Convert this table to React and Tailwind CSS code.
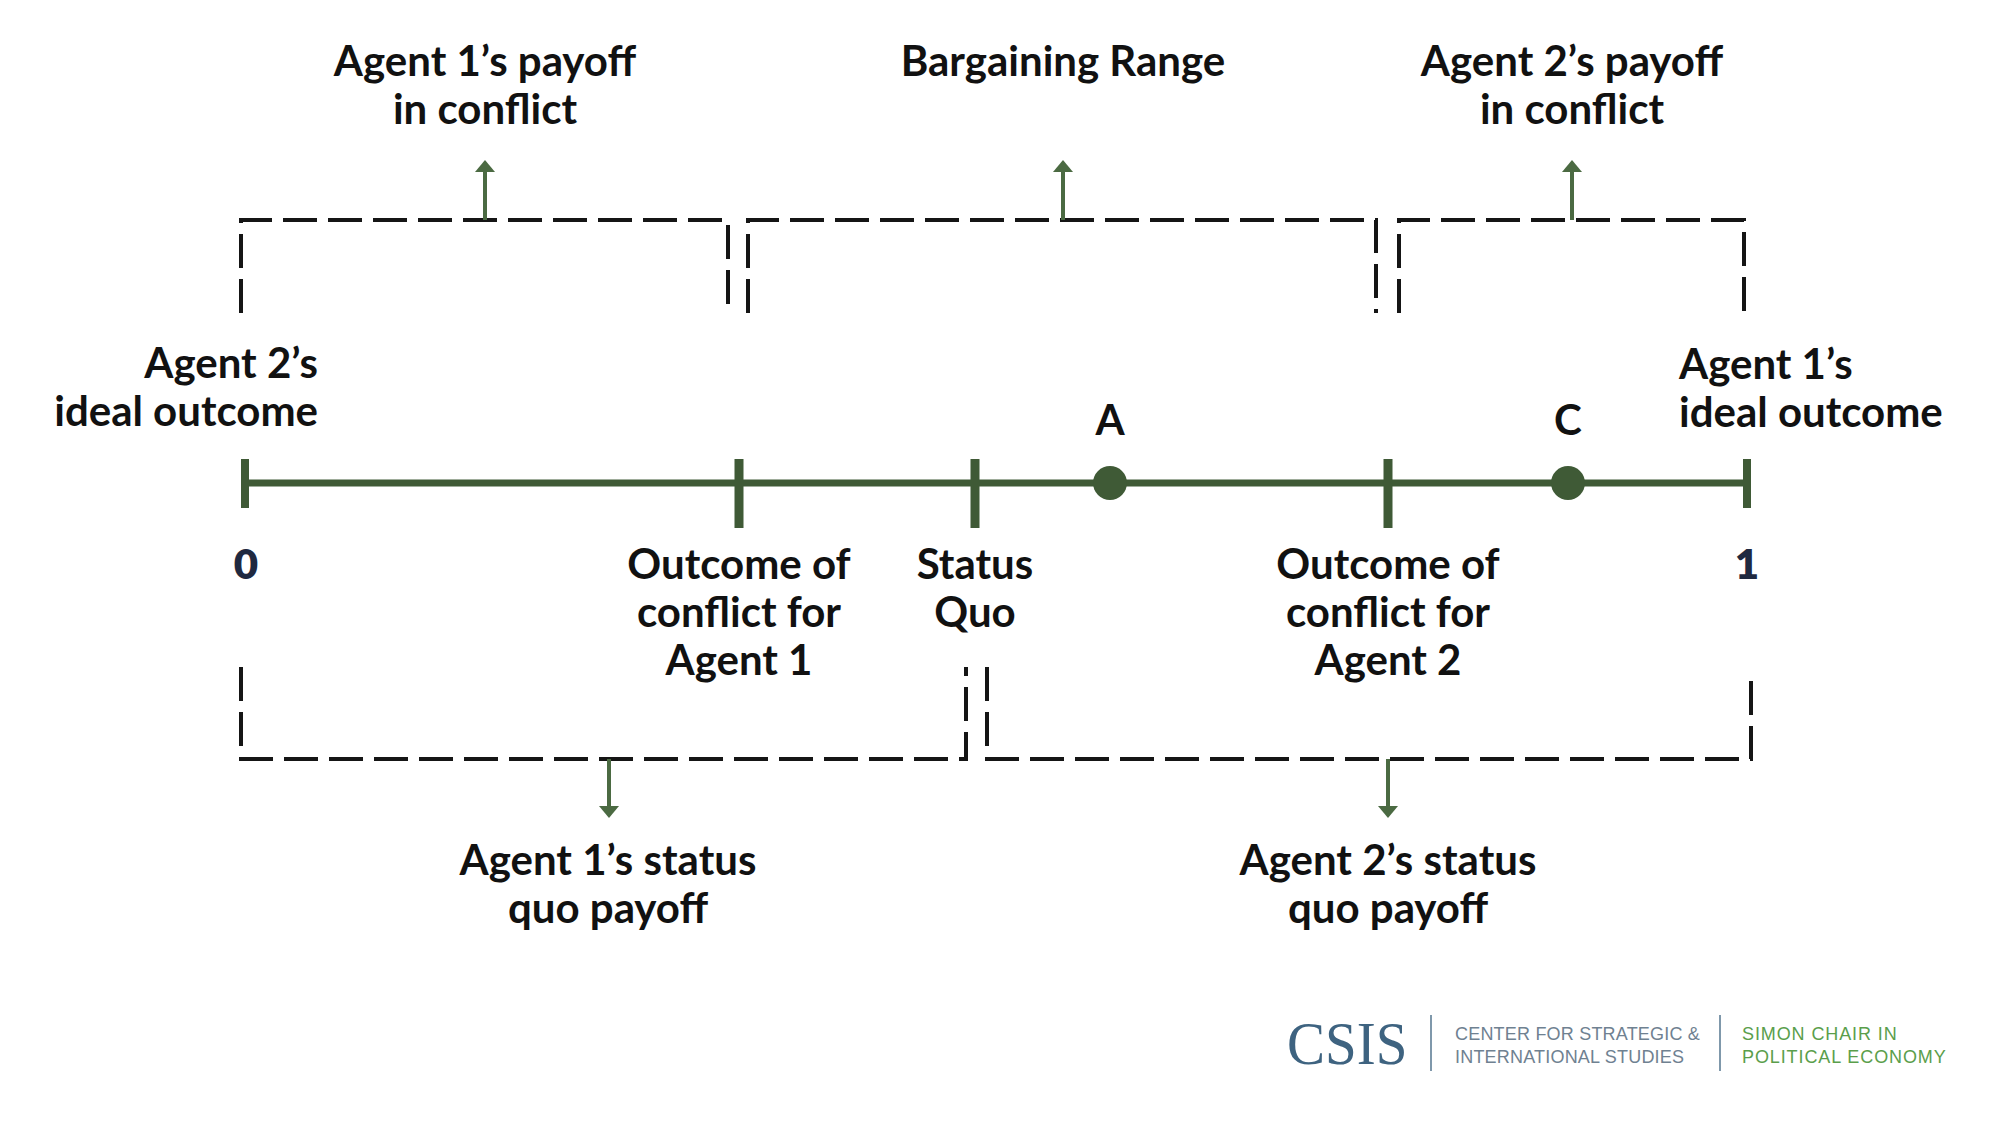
import React from 'react';

const GREEN = '#3f5a36';
const ARROW = '#4b6a42';

// dashed brackets above / below the axis
const BRACKETS = [
    'M241 313 V220 H728 V313',
    'M748 313 V220 H1376 V313',
    'M1399 313 V220 H1744 V313',
    'M241 667 V759 H966 V667',
    'M987 667 V759 H1751 V677',
];

const TICKS = [
    { x: 245, y1: 459, y2: 508, w: 8 },
    { x: 739, y1: 459, y2: 528, w: 9 },
    { x: 975, y1: 459, y2: 528, w: 9 },
    { x: 1388, y1: 459, y2: 528, w: 9 },
    { x: 1747, y1: 459, y2: 508, w: 8 },
];

const UpArrow = ({ x }) => (
    <g fill={ARROW} stroke="none">
        <rect x={x - 2} y={170} width={4} height={50} />
        <polygon points={`${x - 10},172 ${x + 10},172 ${x},160`} />
    </g>
);

const DownArrow = ({ x }) => (
    <g fill={ARROW} stroke="none">
        <rect x={x - 2} y={759} width={4} height={50} />
        <polygon points={`${x - 10},806 ${x + 10},806 ${x},818`} />
    </g>
);

function Diagram() {
    return (
        <svg className="absolute inset-0" width="2000" height="1000" viewBox="0 0 2000 1000">
            {BRACKETS.map((d, i) => (
                <path key={i} d={d} fill="none" stroke="#151515" strokeWidth="4" strokeDasharray="34 11" />
            ))}
            <UpArrow x={485} />
            <UpArrow x={1063} />
            <UpArrow x={1572} />
            <DownArrow x={609} />
            <DownArrow x={1388} />

            <rect x={245} y={479.5} width={1502} height={7} fill={GREEN} />
            {TICKS.map((t) => (
                <rect key={t.x} x={t.x - t.w / 2} y={t.y1} width={t.w} height={t.y2 - t.y1} fill={GREEN} />
            ))}
            <circle cx={1110} cy={483} r={17} fill={GREEN} />
            <circle cx={1568} cy={483} r={17} fill={GREEN} />
        </svg>
    );
}

export default function App() {
    return (
        <div className="w-[2000px] h-[1142px] bg-white flex flex-col overflow-hidden font-['Lato','Open_Sans',sans-serif]">
            <div className="relative h-[1000px] text-[42px] leading-[48px] font-bold text-[#111111]">
                <Diagram />

                {/* top labels */}
                <div className="absolute left-[485px] top-[36px] -translate-x-1/2 text-center whitespace-nowrap">
                    Agent 1’s payoff<br />in conflict
                </div>
                <div className="absolute left-[1063px] top-[36px] -translate-x-1/2 text-center whitespace-nowrap">
                    Bargaining Range
                </div>
                <div className="absolute left-[1572px] top-[36px] -translate-x-1/2 text-center whitespace-nowrap">
                    Agent 2’s payoff<br />in conflict
                </div>

                {/* ideal outcomes */}
                <div className="absolute left-[318px] top-[338px] -translate-x-full text-right whitespace-nowrap">
                    Agent 2’s<br />ideal outcome
                </div>
                <div className="absolute left-[1679px] top-[339px] text-left whitespace-nowrap">
                    Agent 1’s<br />ideal outcome
                </div>

                {/* points */}
                <div className="absolute left-[1110px] top-[395px] -translate-x-1/2">A</div>
                <div className="absolute left-[1568px] top-[395px] -translate-x-1/2">C</div>

                {/* axis labels */}
                <div className="absolute left-[246px] top-[539px] -translate-x-1/2 font-extrabold text-[#1f2940]">0</div>
                <div className="absolute left-[1747px] top-[539px] -translate-x-1/2 font-extrabold text-[#1f2940]">1</div>
                <div className="absolute left-[739px] top-[539px] -translate-x-1/2 text-center whitespace-nowrap">
                    Outcome of<br />conflict for<br />Agent 1
                </div>
                <div className="absolute left-[975px] top-[539px] -translate-x-1/2 text-center whitespace-nowrap">
                    Status<br />Quo
                </div>
                <div className="absolute left-[1388px] top-[539px] -translate-x-1/2 text-center whitespace-nowrap">
                    Outcome of<br />conflict for<br />Agent 2
                </div>

                {/* bottom labels */}
                <div className="absolute left-[608px] top-[835px] -translate-x-1/2 text-center whitespace-nowrap">
                    Agent 1’s status<br />quo payoff
                </div>
                <div className="absolute left-[1388px] top-[835px] -translate-x-1/2 text-center whitespace-nowrap">
                    Agent 2’s status<br />quo payoff
                </div>
            </div>

            {/* footer logo */}
            <div className="h-[86px] flex items-center justify-end pr-[55px]">
                <div className="w-[121px] h-[62px] flex items-center">
                    <span className="origin-left scale-x-[0.92] font-['Liberation_Serif',serif] text-[62px] leading-none text-[#3e6380] whitespace-nowrap">
                        CSIS
                    </span>
                </div>
                <div className="w-[2px] h-[56px] bg-[#7f98ab] ml-[22px] mr-[23px]" />
                <div className="w-[245px] pt-[6px] font-['Liberation_Sans',sans-serif] text-[18px] leading-[23px] tracking-[0.2px] text-[#6f8191] whitespace-nowrap">
                    <div>CENTER FOR STRATEGIC &amp;</div>
                    <div>INTERNATIONAL STUDIES</div>
                </div>
                <div className="w-[2px] h-[56px] bg-[#7f98ab] ml-[19px] mr-[21px]" />
                <div className="w-[203px] pt-[6px] font-['Liberation_Sans',sans-serif] text-[18px] leading-[23px] tracking-[0.9px] text-[#5a9e4b] whitespace-nowrap">
                    <div>SIMON CHAIR IN</div>
                    <div>POLITICAL ECONOMY</div>
                </div>
            </div>
        </div>
    );
}
